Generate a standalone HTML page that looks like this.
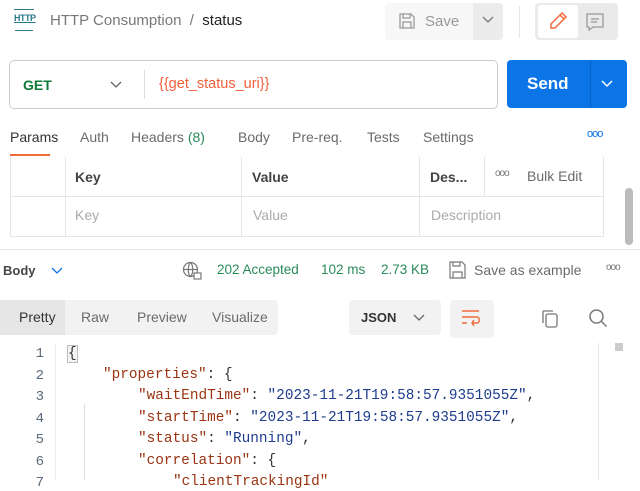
<!DOCTYPE html>
<html><head><meta charset="utf-8"><style>
*{margin:0;padding:0;box-sizing:border-box}
body{width:640px;height:480px;overflow:hidden;background:#fff;font-family:"Liberation Sans",sans-serif;position:relative;color:#212121}
.a{position:absolute;white-space:nowrap}
.g{color:#6b6b6b}
.mono{font-family:"Liberation Mono",monospace;font-size:14.4px}
.ln{position:absolute;left:20px;width:24px;text-align:right;color:#5a6a7a;font-family:"Liberation Mono",monospace;font-size:14px}
.k{color:#9a3412}.s{color:#1f3d8f}.p{color:#333}
</style></head><body>
<div class="a" style="left:14px;top:13px;font-size:9px;font-weight:bold;color:#2a7a8a;letter-spacing:-0.5px;text-decoration:underline">HTTP</div>
<div class="a" style="left:14px;top:9px;width:20px;border-top:1.5px solid #2a7a8a"></div>
<div class="a" style="left:15px;top:30px;width:18px;border-top:1.5px solid #2a7a8a"></div>
<div class="a g" style="left:50px;top:12px;font-size:15px;color:#777">HTTP Consumption &nbsp;/&nbsp; <span style="color:#212121">status</span></div>
<div class="a" style="left:385px;top:3px;width:88px;height:37px;background:#f7f7f7;border-radius:4px 0 0 4px"></div>
<div class="a" style="left:473px;top:3px;width:30px;height:37px;background:#ececec;border-radius:0 4px 4px 0"></div>
<svg class="a" style="left:398px;top:12px" width="18" height="18" viewBox="0 0 18 18" fill="none" stroke="#999" stroke-width="1.3"><path d="M2 2h11l3 3v11H2z M5 2v4h7V2 M5 16v-6h8v6"/></svg>
<div class="a" style="left:425px;top:13px;font-size:15px;color:#999">Save</div>
<svg class="a" style="left:482px;top:16px" width="12" height="8"><path d="M1 1l5 5 5-5" fill="none" stroke="#777" stroke-width="1.3"/></svg>
<div class="a" style="left:519px;top:6px;width:1px;height:32px;background:#e6e6e6"></div>
<div class="a" style="left:535px;top:3px;width:83px;height:37px;background:#eaeaea;border-radius:4px"></div>
<div class="a" style="left:538px;top:5px;width:40px;height:33px;background:#fff;border-radius:3px"></div>
<svg class="a" style="left:548px;top:11px" width="20" height="20" viewBox="0 0 20 20" fill="none" stroke="#f06a3a" stroke-width="1.5"><path d="M14 2l4 4L7 17H3v-4z M12 4l4 4"/></svg>
<svg class="a" style="left:585px;top:12px" width="20" height="20" viewBox="0 0 20 20" fill="none" stroke="#999" stroke-width="1.3"><path d="M2 2h16v13H8l-4 3v-3H2z M6 7h8 M6 10h6"/></svg>
<div class="a" style="left:9px;top:60px;width:489px;height:49px;border:1px solid #ccc;border-radius:5px"></div>
<div class="a" style="left:23px;top:77px;font-size:14px;font-weight:bold;color:#0f7a3a">GET</div>
<svg class="a" style="left:110px;top:81px" width="12" height="8"><path d="M1 1l5 5 5-5" fill="none" stroke="#666" stroke-width="1.3"/></svg>
<div class="a" style="left:144px;top:70px;width:1px;height:29px;background:#ddd"></div>
<div class="a" style="left:159px;top:76px;font-size:14.5px;color:#f0603a">{{get_status_uri}}</div>
<div class="a" style="left:507px;top:60px;width:120px;height:48px;background:#0b74e6;border-radius:4px"></div>
<div class="a" style="left:590px;top:60px;width:1px;height:48px;background:#0a62c4"></div>
<div class="a" style="left:527px;top:74px;font-size:17px;font-weight:bold;color:#fff">Send</div>
<svg class="a" style="left:601px;top:80px" width="12" height="8"><path d="M1 1l5 5 5-5" fill="none" stroke="#fff" stroke-width="1.5"/></svg>
<div class="a" style="left:10px;top:129px;font-size:14px;color:#333">Params</div>
<div class="a" style="left:10px;top:154px;width:40px;height:2px;background:#f26b3a"></div>
<div class="a g" style="left:80px;top:129px;font-size:14px">Auth</div>
<div class="a g" style="left:131px;top:129px;font-size:14px">Headers <span style="color:#2a8a5a">(8)</span></div>
<div class="a g" style="left:238px;top:129px;font-size:14px">Body</div>
<div class="a g" style="left:292px;top:129px;font-size:14px">Pre-req.</div>
<div class="a g" style="left:367px;top:129px;font-size:14px">Tests</div>
<div class="a g" style="left:423px;top:129px;font-size:14px">Settings</div>
<div class="a" style="left:587px;top:128px;font-size:11px;color:#0b74e6;letter-spacing:-1px">ooo</div>
<div class="a" style="left:10px;top:157px;width:594px;height:80px;border:1px solid #e6e6e6;border-top:none"></div>
<div class="a" style="left:10px;top:196px;width:594px;height:1px;background:#e6e6e6"></div>
<div class="a" style="left:65px;top:157px;width:1px;height:80px;background:#e6e6e6"></div>
<div class="a" style="left:241px;top:157px;width:1px;height:80px;background:#e6e6e6"></div>
<div class="a" style="left:419px;top:157px;width:1px;height:80px;background:#e6e6e6"></div>
<div class="a" style="left:484px;top:157px;width:1px;height:39px;background:#e6e6e6"></div>
<div class="a" style="left:75px;top:169px;font-size:14px;font-weight:bold;color:#444">Key</div>
<div class="a" style="left:252px;top:169px;font-size:14px;font-weight:bold;color:#444">Value</div>
<div class="a" style="left:430px;top:169px;font-size:14px;font-weight:bold;color:#444">Des...</div>
<div class="a" style="left:495px;top:168px;font-size:10px;color:#777;letter-spacing:-1px">ooo</div>
<div class="a g" style="left:527px;top:168px;font-size:14px">Bulk Edit</div>
<div class="a" style="left:75px;top:207px;font-size:14px;color:#aaa">Key</div>
<div class="a" style="left:253px;top:207px;font-size:14px;color:#aaa">Value</div>
<div class="a" style="left:431px;top:207px;font-size:14px;color:#aaa">Description</div>
<div class="a" style="left:625px;top:188px;width:8px;height:57px;background:#bbb;border-radius:4px"></div>
<div class="a" style="left:0;top:249px;width:640px;height:1px;background:#e6e6e6"></div>
<div class="a" style="left:3px;top:263px;font-size:13px;font-weight:bold;color:#444">Body</div>
<svg class="a" style="left:51px;top:267px" width="12" height="8"><path d="M1 1l5 5 5-5" fill="none" stroke="#0b74e6" stroke-width="1.3"/></svg>
<svg class="a" style="left:182px;top:261px" width="20" height="19" viewBox="0 0 20 19" fill="none" stroke="#777" stroke-width="1.2"><circle cx="8.5" cy="8.5" r="7"/><path d="M1.5 8.5h14 M8.5 1.5c-3 3-3 11 0 14 M8.5 1.5c3 3 3 11 0 14"/><rect x="12" y="12" width="7" height="6" fill="#fff"/></svg>
<div class="a" style="left:217px;top:262px;font-size:13.5px;color:#2a8a5a">202 Accepted</div>
<div class="a" style="left:321px;top:262px;font-size:13.5px;color:#2a8a5a">102 ms</div>
<div class="a" style="left:381px;top:262px;font-size:13.5px;color:#2a8a5a">2.73 KB</div>
<svg class="a" style="left:449px;top:261px" width="17" height="18" viewBox="0 0 17 18" fill="none" stroke="#777" stroke-width="1.2"><path d="M1 1h12l3 3v13H1z M4 1v4h7V1 M4 17v-6h9v6"/></svg>
<div class="a g" style="left:474px;top:262px;font-size:14px">Save as example</div>
<div class="a" style="left:606px;top:262px;font-size:10px;color:#777;letter-spacing:-1px">ooo</div>
<div class="a" style="left:0;top:300px;width:278px;height:35px;background:#f2f2f2;border-radius:0 4px 4px 0"></div>
<div class="a" style="left:0;top:300px;width:65px;height:35px;background:#e6e6e6"></div>
<div class="a" style="left:19px;top:309px;font-size:14px;color:#333">Pretty</div>
<div class="a g" style="left:81px;top:309px;font-size:14px">Raw</div>
<div class="a g" style="left:137px;top:309px;font-size:14px">Preview</div>
<div class="a g" style="left:212px;top:309px;font-size:14px">Visualize</div>
<div class="a" style="left:349px;top:300px;width:92px;height:35px;background:#f2f2f2;border-radius:4px"></div>
<div class="a" style="left:361px;top:310px;font-size:13px;font-weight:bold;color:#333">JSON</div>
<svg class="a" style="left:413px;top:314px" width="12" height="8"><path d="M1 1l5 5 5-5" fill="none" stroke="#666" stroke-width="1.3"/></svg>
<div class="a" style="left:450px;top:300px;width:44px;height:38px;background:#f2f2f2;border-radius:4px"></div>
<svg class="a" style="left:460px;top:308px" width="22" height="20" viewBox="0 0 22 20" fill="none" stroke="#f06a3a" stroke-width="1.4"><path d="M2 3h17 M2 9h15c3 0 3 6 0 6h-5 M14 12l-2 3 2 3 M2 15h5"/></svg>
<svg class="a" style="left:541px;top:309px" width="18" height="20" viewBox="0 0 18 20" fill="none" stroke="#777" stroke-width="1.3"><rect x="5" y="5" width="11" height="13" rx="2"/><path d="M2 14V3a1 1 0 0 1 1-1h9"/></svg>
<svg class="a" style="left:588px;top:308px" width="20" height="20" viewBox="0 0 20 20" fill="none" stroke="#777" stroke-width="1.5"><circle cx="8.5" cy="8.5" r="6.5"/><path d="M13.5 13.5l5 5"/></svg>
<div class="a" style="left:615px;top:343px;width:8px;height:8px;background:#ccc"></div>
<div class="a" style="left:598px;top:343px;width:1px;height:137px;background:#e6e6e6"></div>
<div class="a" style="left:55px;top:343px;width:1px;height:137px;background:#eee"></div>
<div class="a" style="left:84px;top:404px;width:1px;height:76px;background:#ddd"></div>
<div class="ln" style="top:346px">1</div>
<div class="ln" style="top:368px">2</div>
<div class="ln" style="top:389px">3</div>
<div class="ln" style="top:411px">4</div>
<div class="ln" style="top:432px">5</div>
<div class="ln" style="top:454px">6</div>
<div class="ln" style="top:475px">7</div>
<div class="a mono p" style="left:67px;top:345px;border:1px solid #bbb;background:#f4f4f4;line-height:16px">{</div>
<div class="a mono" style="left:103px;top:367px"><span class="k">"properties"</span><span class="p">: {</span></div>
<div class="a mono" style="left:138px;top:388px"><span class="k">"waitEndTime"</span><span class="p">: </span><span class="s">"2023-11-21T19:58:57.9351055Z"</span><span class="p">,</span></div>
<div class="a mono" style="left:138px;top:410px"><span class="k">"startTime"</span><span class="p">: </span><span class="s">"2023-11-21T19:58:57.9351055Z"</span><span class="p">,</span></div>
<div class="a mono" style="left:138px;top:431px"><span class="k">"status"</span><span class="p">: </span><span class="s">"Running"</span><span class="p">,</span></div>
<div class="a mono" style="left:138px;top:453px"><span class="k">"correlation"</span><span class="p">: {</span></div>
<div class="a mono" style="left:173px;top:474px"><span class="k">"clientTrackingId"</span></div>
</body></html>
